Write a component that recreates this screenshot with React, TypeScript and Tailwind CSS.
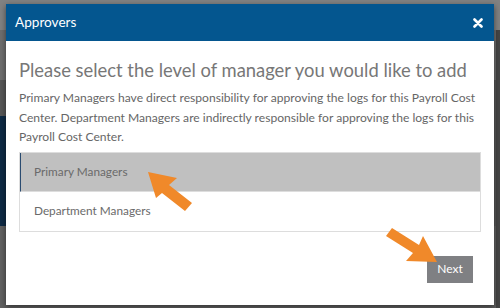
import React from "react";

export default function App() {
  const font = { fontFamily: "Lato, 'Open Sans', sans-serif" };
  return (
    <div className="relative w-[500px] h-[308px] overflow-hidden bg-[#575757]" style={font}>
      {/* background page hints */}
      <div className="absolute left-0 top-0 w-[500px] h-[30px] bg-[#828282]" />
      <div className="absolute left-0 top-[30px] w-[500px] h-[50px] bg-[#6e6e6e]" />
      <div className="absolute left-0 top-[116px] w-[8px] h-[110px] bg-[#0e2a45]" />
      <div className="absolute left-0 top-[226px] w-[500px] h-[82px] bg-[#616161]" />
      <div className="absolute left-[496px] top-[30px] w-[4px] h-[278px] bg-[#454545]" />

      <div className="relative pt-[4px] pl-[6px]">
        <div className="w-[488px] h-[301px] bg-white flex flex-col shadow-[0_2px_6px_rgba(0,0,0,0.5)]">
          <div className="h-[37px] bg-[#04568f] flex items-center justify-between pl-[9px] pr-[11px]">
            <span className="text-white text-[13.6px] leading-none">Approvers</span>
            <svg width="10" height="10" viewBox="0 0 10 10">
              <path d="M1.5 1.5 L8.5 8.5 M8.5 1.5 L1.5 8.5" stroke="white" strokeWidth="2.6" strokeLinecap="round" />
            </svg>
          </div>
          <div className="flex-1 flex flex-col px-[13px] pt-[17px]">
            <h1 className="text-[18.4px] leading-[24px] text-[#777777] whitespace-nowrap">
              Please select the level of manager you would like to add
            </h1>
            <p className="mt-[6px] text-[12.1px] leading-[19.5px] text-[#666666]">
              Primary Managers have direct responsibility for approving the logs for this Payroll Cost Center. Department Managers are indirectly responsible for approving the logs for this Payroll Cost Center.
            </p>
            <div className="mt-[5px] border border-[#dddddd] flex flex-col">
              <div className="h-[39px] bg-[#c0c0c0] border-l border-[#2a4b70] border-b border-b-[#dddddd] flex items-center pl-[13px] text-[11.8px] text-[#6a6a6a]">
                Primary Managers
              </div>
              <div className="h-[39px] bg-white flex items-center pl-[14px] text-[11.8px] text-[#6a6a6a]">
                Department Managers
              </div>
            </div>
            <div className="flex justify-end pr-[8px] mt-[24px]">
              <button className="w-[46px] h-[27px] bg-[#7f8083] text-white text-[12px] flex items-center justify-center">
                Next
              </button>
            </div>
          </div>
        </div>
      </div>

      {/* annotation arrows */}
      <svg className="absolute left-0 top-0 pointer-events-none" width="500" height="308" viewBox="0 0 500 308">
        <polygon points="148,172 177,178 169,185 192,203 185,211 162,193 156,198" fill="#f0892a" />
        <polygon points="437,262 406,261 413,253 386,236 392,228 419,245 423,236" fill="#f0892a" />
      </svg>
    </div>
  );
}
